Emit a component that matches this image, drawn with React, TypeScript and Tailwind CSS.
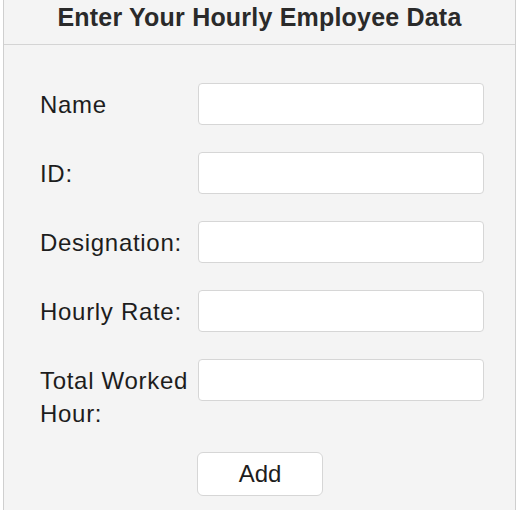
const fields = ["Name", "ID:", "Designation:", "Hourly Rate:", "Total Worked Hour:"]

export default function App() {
  return (
    <div className="w-[518px] h-[510px] overflow-hidden bg-white" style={{ fontFamily: '"Liberation Sans", Arial, sans-serif' }}>
      <div className="ml-[3px] w-[513px] h-[510px] border-x border-[#cfcfcf] bg-[#f4f4f4] text-[#1d1d1d]">
        {/* Header */}
        <div className="h-[45px] border-b border-[#d4d4d4] flex items-center justify-center">
          <h1 className="text-[25px] font-bold leading-none tracking-[0.2px] text-[#2a2a2a] -mt-[10px]">Enter Your Hourly Employee Data</h1>
        </div>

        {/* Form */}
        <div className="pl-[36px] pt-[38px] flex flex-col gap-[27px]">
          {fields.map((f) => (
            <div key={f} className="flex items-start">
              <label className="w-[158px] text-[24px] leading-[33px] tracking-[0.7px] pt-[5px] pr-1">{f}</label>
              <input className="w-[286px] h-[42px] bg-white border border-[#d6d6d6] rounded-[4px] outline-none" />
            </div>
          ))}
        </div>

        <div className="pl-[193px] mt-[22px]">
          <button className="w-[126px] h-[44px] bg-white border border-[#d6d6d6] rounded-[6px] text-[24px] text-[#1d1d1d]">Add</button>
        </div>
      </div>
    </div>
  )
}
